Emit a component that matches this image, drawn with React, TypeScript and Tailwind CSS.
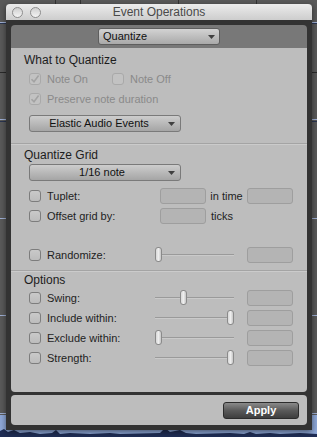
import React from 'react';

const font = { fontFamily: '"Liberation Sans", Arial, sans-serif' };

const Check = ({ checked = false, disabled = false }: { checked?: boolean; disabled?: boolean }) => (
  <div
    className={`w-[12px] h-[12px] rounded-[3px] border flex items-center justify-center shrink-0 ${
      disabled ? 'border-[#a9a9a9] bg-[#c2c2c2]' : 'border-[#7d7d7d] bg-gradient-to-b from-[#c9c9c9] to-[#bcbcbc]'
    }`}
  >
    {checked && (
      <svg width="10" height="10" viewBox="0 0 10 10">
        <path d="M1.5 5.2 L4 7.8 L8.6 1.6" fill="none" stroke={disabled ? '#a3a3a3' : '#333'} strokeWidth="1.6" />
      </svg>
    )}
  </div>
);

const Field = () => <div className="w-[46px] h-[16px] rounded-[3px] border border-[#9e9e9e] bg-[#b4b4b4]" />;

const Slider = ({ pos }: { pos: number }) => (
  <div className="relative w-[79px] h-[16px]">
    <div className="absolute left-0 right-0 top-[7px] h-px bg-[#9a9a9a]" />
    <div className="absolute left-0 right-0 top-[8px] h-px bg-[#cacaca]" />
    <div
      className="absolute top-0 w-[7px] h-[15px] rounded-[3px] border border-[#8a8a8a] bg-gradient-to-r from-[#d8d8d8] via-[#eeeeee] to-[#c6c6c6]"
      style={{ left: pos }}
    />
  </div>
);

const Arrow = () => (
  <svg width="7" height="4" viewBox="0 0 7 4" className="shrink-0">
    <path d="M0 0 H7 L3.5 4 Z" fill="#404040" />
  </svg>
);

const SectionTitle = ({ children, className = '' }: { children: React.ReactNode; className?: string }) => (
  <div className={`pl-[13px] h-[14px] leading-[14px] text-[12px] text-[#1c1c1c] ${className}`}>{children}</div>
);

const Separator = ({ className = '' }: { className?: string }) => (
  <div className={className}>
    <div className="h-px bg-[#a4a4a4]" />
    <div className="h-px bg-[#cbcbcb]" />
  </div>
);

const OptionRow = ({ label, pos }: { label: string; pos: number }) => (
  <div className="flex items-center h-[20px]">
    <div className="w-[144px] flex items-center pl-[18px]">
      <Check />
      <span className="ml-[6px] text-[11px] text-[#1e1e1e]">{label}</span>
    </div>
    <Slider pos={pos} />
    <div className="ml-[13px]">
      <Field />
    </div>
  </div>
);

const App: React.FC = () => {
  return (
    <div className="relative w-[317px] h-[437px] bg-[#5a5a5a] overflow-hidden" style={font}>
      {/* Background track area */}
      <div className="absolute left-0 right-0 top-[22px] h-px bg-[#9fb0d4]" />
      <div className="absolute left-0 right-0 top-[23px] h-px bg-[#2a3550]" />
      <div className="absolute left-0 right-0 top-[72px] h-px bg-[#2a2a2a]" />
      <div className="absolute left-0 right-0 top-[119px] h-px bg-[#9fb0d4]" />
      <div className="absolute left-0 right-0 top-[121px] h-px bg-[#2a3550]" />
      <div className="absolute left-0 right-0 top-[218px] h-px bg-[#9fb0d4]" />
      <div className="absolute left-0 right-0 top-[315px] h-px bg-[#9fb0d4]" />
      <div className="absolute left-0 right-0 top-[413px] h-px bg-[#9fb0d4]" />
      <div className="absolute left-0 right-0 top-[415px] h-[22px] bg-[#8ea8d8]" />
      <svg className="absolute left-0 top-[426px]" width="317" height="11" viewBox="0 0 317 11">
        <path
          d="M0 11 L0 5 L4 3 L8 6 L14 4 L20 7 L30 6 L40 8 L52 7 L56 4 L60 8 L70 7 L90 8 L110 7 L120 8 L160 7 L165 2 L170 6 L180 4 L186 7 L196 8 L230 7 L244 8 L250 6 L256 8 L270 7 L280 8 L300 7 L317 8 L317 11 Z"
          fill="#1f2d55"
        />
      </svg>
      <div className="absolute top-0 left-[55px] w-px h-[4px] bg-[#333]" />
      <div className="absolute top-0 left-[80px] w-px h-[4px] bg-[#333]" />
      <div className="absolute top-0 left-[178px] w-px h-[4px] bg-[#333]" />
      <div className="absolute top-0 left-[256px] w-px h-[4px] bg-[#333]" />

      {/* Window */}
      <div className="relative ml-[6px] mt-[4px] w-[306px] flex flex-col shadow-[0_2px_6px_rgba(0,0,0,0.5)]">
        {/* Title bar */}
        <div className="relative h-[16px] rounded-t-[4px] bg-gradient-to-b from-[#ececec] to-[#cdcdcd] flex items-center justify-center">
          <div className="absolute left-[6px] top-[3px] flex gap-[7px]">
            <div className="w-[11px] h-[11px] rounded-full border border-[#8d8d8d] bg-gradient-to-b from-[#cfcfcf] to-[#f4f4f4]" />
            <div className="w-[11px] h-[11px] rounded-full border border-[#8d8d8d] bg-gradient-to-b from-[#cfcfcf] to-[#f4f4f4]" />
          </div>
          <span className="text-[12px] leading-[14px] text-[#4a4a4a]">Event Operations</span>
        </div>

        <div className="bg-[#333333] p-[5px] flex flex-col gap-[3px]">
          {/* Main panel */}
          <div className="rounded-[4px] overflow-hidden flex flex-col">
            <div className="h-[23px] bg-[#787878] flex items-center justify-center">
              <div className="w-[122px] h-[17px] rounded-[3px] border border-[#5e5e5e] bg-gradient-to-b from-[#d3d3d3] to-[#a9a9a9] flex items-center pl-[4px] pr-[4px]">
                <span className="text-[11px] leading-[13px] text-[#111] flex-1">Quantize</span>
                <Arrow />
              </div>
            </div>

            <div className="h-[344px] bg-[#bdbdbd] flex flex-col">
              <SectionTitle className="mt-[5px]">What to Quantize</SectionTitle>
              <div className="mt-[2px] h-[20px] flex items-center pl-[18px]">
                <Check checked disabled />
                <span className="ml-[6px] text-[11px] text-[#8a8a8a]">Note On</span>
                <div className="ml-[24px] flex items-center">
                  <Check disabled />
                  <span className="ml-[6px] text-[11px] text-[#8a8a8a]">Note Off</span>
                </div>
              </div>
              <div className="h-[20px] flex items-center pl-[18px]">
                <Check checked disabled />
                <span className="ml-[6px] text-[11px] text-[#8a8a8a]">Preserve note duration</span>
              </div>
              <div className="mt-[6px] ml-[18px] w-[152px] h-[17px] rounded-[3px] border border-[#7a7a7a] bg-gradient-to-b from-[#cdcdcd] to-[#a5a5a5] flex items-center pr-[5px]">
                <span className="flex-1 text-center text-[11px] leading-[13px] text-[#111]">Elastic Audio Events</span>
                <Arrow />
              </div>

              <Separator className="mt-[11px]" />
              <SectionTitle className="mt-[3px]">Quantize Grid</SectionTitle>
              <div className="mt-[2px] ml-[18px] w-[152px] h-[17px] rounded-[3px] border border-[#7a7a7a] bg-gradient-to-b from-[#cdcdcd] to-[#a5a5a5] flex items-center pr-[5px]">
                <span className="flex-1 text-center text-[11px] leading-[13px] text-[#111] pl-[6px]">1/16 note</span>
                <Arrow />
              </div>

              <div className="mt-[5px] h-[20px] flex items-center">
                <div className="w-[149px] flex items-center pl-[18px]">
                  <Check />
                  <span className="ml-[6px] text-[11px] text-[#1e1e1e]">Tuplet:</span>
                </div>
                <Field />
                <span className="w-[41px] text-center text-[11px] text-[#1e1e1e]">in time</span>
                <Field />
              </div>
              <div className="h-[20px] flex items-center">
                <div className="w-[149px] flex items-center pl-[18px]">
                  <Check />
                  <span className="ml-[6px] text-[11px] text-[#1e1e1e]">Offset grid by:</span>
                </div>
                <Field />
                <span className="ml-[5px] text-[11px] text-[#1e1e1e]">ticks</span>
              </div>

              <div className="mt-[19px]">
                <OptionRow label="Randomize:" pos={0} />
              </div>

              <Separator className="mt-[5px]" />
              <SectionTitle className="mt-[1px]">Options</SectionTitle>
              <div className="mt-[1px] flex flex-col">
                <OptionRow label="Swing:" pos={25} />
                <OptionRow label="Include within:" pos={72} />
                <OptionRow label="Exclude within:" pos={0} />
                <OptionRow label="Strength:" pos={72} />
              </div>
            </div>
          </div>

          {/* Footer panel */}
          <div className="h-[30px] rounded-[4px] bg-[#bdbdbd] flex items-center justify-end pr-[8px]">
            <button className="w-[76px] h-[17px] rounded-[3px] border border-[#2c2c2c] bg-gradient-to-b from-[#8a8a8a] via-[#5a5a5a] to-[#3e3e3e] text-white text-[11px] font-bold leading-[13px]">
              Apply
            </button>
          </div>
        </div>
      </div>
    </div>
  );
};

export default App;
